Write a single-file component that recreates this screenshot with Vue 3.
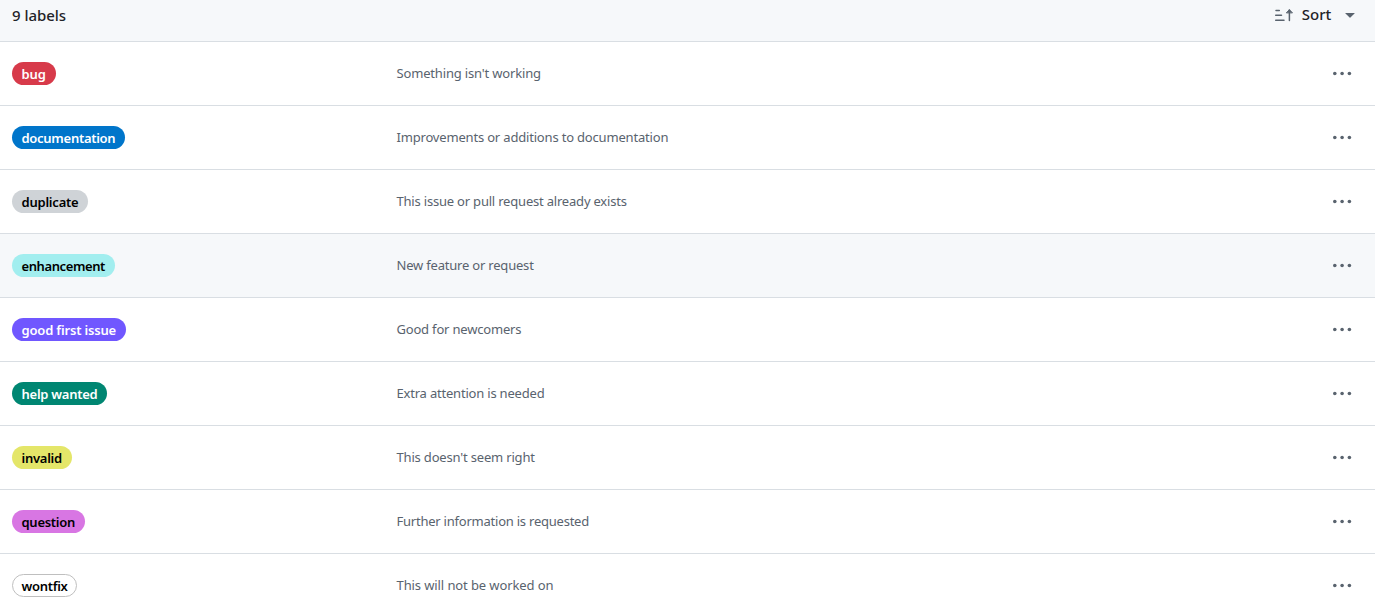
<script setup>
const labels = [
  { name: 'bug', text: "Something isn't working", tone: 'bug', w: 44, ls: -0.17, ps: -0.15 },
  { name: 'documentation', text: 'Improvements or additions to documentation', tone: 'documentation', w: 113, ls: -0.18, ps: -0.28 },
  { name: 'duplicate', text: 'This issue or pull request already exists', tone: 'duplicate', w: 76, ls: -0.2, ps: -0.22 },
  { name: 'enhancement', text: 'New feature or request', tone: 'enhancement', w: 103, ls: -0.2, ps: -0.4 },
  { name: 'good first issue', text: 'Good for newcomers', tone: 'first', w: 114, ls: -0.19, ps: -0.18 },
  { name: 'help wanted', text: 'Extra attention is needed', tone: 'help', w: 95, ls: -0.2, ps: -0.26 },
  { name: 'invalid', text: "This doesn't seem right", tone: 'invalid', w: 60, ls: -0.18, ps: -0.26 },
  { name: 'question', text: 'Further information is requested', tone: 'question', w: 73, ls: -0.23, ps: -0.27 },
  { name: 'wontfix', text: 'This will not be worked on', tone: 'wontfix', w: 65, ls: -0.1, ps: -0.3 },
]
</script>

<template>
  <main class="list">
    <header class="head">
      <h2 class="count">9 labels</h2>
      <button class="sort" type="button">
        <svg class="sort-icon" width="20" height="16" viewBox="0 0 20 16" fill="none" stroke="currentColor" stroke-width="1.5" stroke-linecap="round">
          <path d="M2 3.6h3.3M1.7 8.3h5.8M1.7 13.2h8.3M15.4 13.4V3" />
          <path d="M12.6 5.6l2.8-2.9 2.8 2.9z" fill="currentColor" stroke-width="1" stroke-linejoin="round" />
        </svg>
        <span class="sort-text">Sort</span>
        <svg class="caret" width="10" height="5" viewBox="0 0 10 5" fill="currentColor"><path d="M.7 0h8.6q.6 0 .2.5L5.4 4.6q-.4.4-.8 0L.5.5Q.1 0 .7 0z" /></svg>
      </button>
    </header>
    <ul class="rows">
      <li v-for="l in labels" :key="l.name" class="row" :class="{ hovered: l.tone === 'enhancement' }">
        <div class="name"><span class="pill" :class="l.tone" :style="{ width: l.w + 'px', letterSpacing: l.ps + 'px' }">{{ l.name }}</span></div>
        <div class="desc"><span :style="{ letterSpacing: l.ls + 'px' }">{{ l.text }}</span></div>
        <button class="more" type="button" :aria-label="l.name">
          <svg width="19" height="5" viewBox="0 0 19 5" fill="currentColor"><circle cx="1.8" cy="2.5" r="1.8" /><circle cx="9.1" cy="2.5" r="1.8" /><circle cx="16.4" cy="2.5" r="1.8" /></svg>
        </button>
      </li>
    </ul>
  </main>
</template>

<style>
body { background: #fff; overflow: hidden; }
</style>

<style scoped>
.list { width: 1375px; height: 611px; overflow: hidden; font-family: "Noto Sans", sans-serif; color: #1f2328; }
button { display: flex; align-items: center; border: 0; padding: 0; background: none; font: inherit; color: #59636e; }
.head { box-sizing: border-box; height: 42px; display: flex; justify-content: space-between; align-items: flex-start; padding: 4px 20px 0 12px; background: #f6f8fa; border-bottom: 1px solid #d9dee3; }
.count { margin: 0; padding-top: 1px; font-size: 15px; line-height: 20px; font-weight: 500; letter-spacing: -.05px; }
.sort { height: 20px; }
.sort-icon { margin-top: 1px; }
.caret { margin-top: 3px; }
.sort-text { width: 33px; margin: 0 12px 0 6px; font-size: 15px; line-height: 20px; font-weight: 500; color: #1f2328; }
.rows { margin: 0; padding: 0; list-style: none; }
.row { box-sizing: border-box; height: 64px; display: flex; align-items: center; padding: 0 23px 0 12px; border-bottom: 1px solid #d9dee3; }
.hovered { background: #f6f8fa; }
.name { width: 384px; display: flex; }
.pill { box-sizing: border-box; height: 23px; border-radius: 12px; padding: 1px 0 0 9.5px; font-size: 13px; line-height: 22px; font-weight: 600; white-space: nowrap; color: #000; }
.desc { flex: 1; padding: 0 0 2px .5px; font-size: 13px; line-height: 20px; color: #59636e; white-space: nowrap; }
.bug { background: #d73a4a; color: #fff; }
.documentation { background: #0075ca; color: #fff; }
.duplicate { background: #cfd3d7; }
.enhancement { background: #a2eeef; }
.first { background: #7057ff; color: #fff; }
.help { background: #008672; color: #fff; }
.invalid { background: #e4e669; }
.question { background: #d876e3; }
.wontfix { border: 1px solid #bfbfbf; padding: 1px 0 0 8.5px; line-height: 20px; }
</style>
